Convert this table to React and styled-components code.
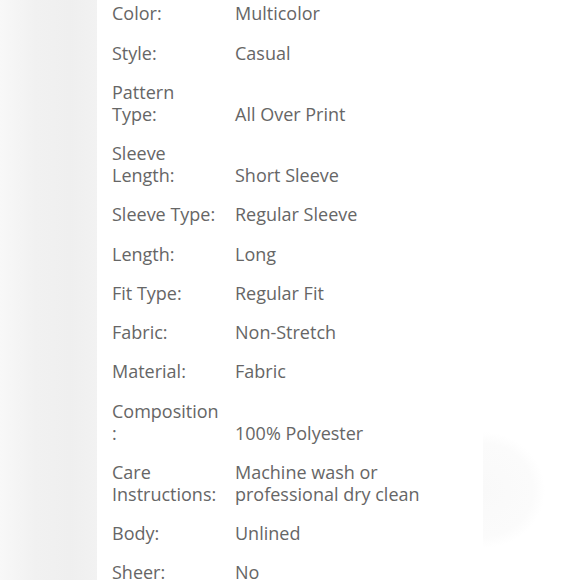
import React from "react";
import styled, { createGlobalStyle } from "styled-components";

const Global = createGlobalStyle`
  html, body { margin: 0; padding: 0; background: #ffffff; }
  body { overflow: hidden; }
`;

const Page = styled.div`
  display: flex;
  width: 580px;
  height: 580px;
  overflow: hidden;
  background: #ffffff;
`;

const Side = styled.div`
  width: 97px;
  flex: none;
  background: linear-gradient(to right, #f8f8f8 0px, #f1f1f1 35px, #efefef 70px, #f2f2f2 97px);
`;

const Panel = styled.div`
  flex: 1;
  padding-left: 15px;
  background-color: #ffffff;
  background-image: radial-gradient(ellipse 62px 58px at 0% 50%, #f9f9f9 0%, #fbfbfb 80%, rgba(255,255,255,0) 100%);
  background-repeat: no-repeat;
  background-position: 386px 432px;
  background-size: 62px 116px;
`;

const Table = styled.div`
  margin-top: -7px;
  display: flex;
  flex-direction: column;
  font-family: "Open Sans", Lato, sans-serif;
  font-size: 18px;
  line-height: 22px;
  color: #666666;
`;

const Row = styled.div`
  display: grid;
  grid-template-columns: 123px auto;
  align-items: end;
  padding: 9.25px 0 8px;
`;

const Cell = styled.div`
  white-space: nowrap;
`;

const rows = [
  [["Color:"], ["Multicolor"]],
  [["Style:"], ["Casual"]],
  [["Pattern", "Type:"], ["All Over Print"]],
  [["Sleeve", "Length:"], ["Short Sleeve"]],
  [["Sleeve Type:"], ["Regular Sleeve"]],
  [["Length:"], ["Long"]],
  [["Fit Type:"], ["Regular Fit"]],
  [["Fabric:"], ["Non-Stretch"]],
  [["Material:"], ["Fabric"]],
  [["Composition", ":"], ["100% Polyester"]],
  [["Care", "Instructions:"], ["Machine wash or", "professional dry clean"]],
  [["Body:"], ["Unlined"]],
  [["Sheer:"], ["No"]],
];

const Lines = ({ lines }) =>
  lines.map((l, i) => (
    <React.Fragment key={i}>
      {i > 0 && <br />}
      {l}
    </React.Fragment>
  ));

export default function App() {
  return (
    <>
      <Global />
      <Page>
        <Side />
        <Panel>
          <Table>
            {rows.map(([k, v], i) => (
              <Row key={i}>
                <Cell><Lines lines={k} /></Cell>
                <Cell><Lines lines={v} /></Cell>
              </Row>
            ))}
          </Table>
        </Panel>
      </Page>
    </>
  );
}
